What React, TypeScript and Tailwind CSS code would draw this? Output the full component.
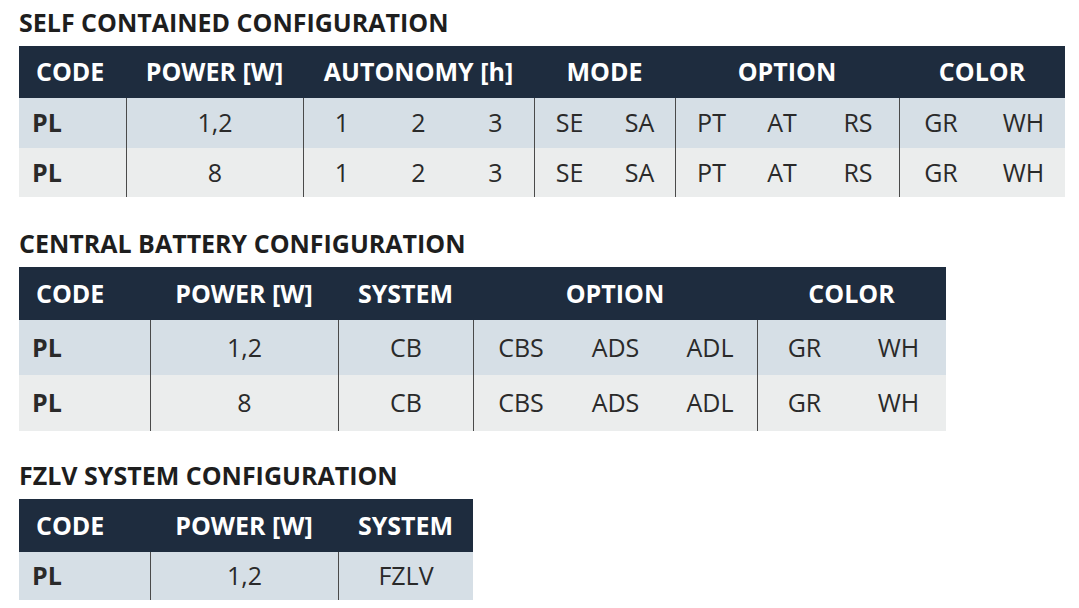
const font = { fontFamily: '"Open Sans", "Noto Sans", sans-serif' };

type Group = { label: string; cols: number };

function Table({
  cols,
  groups,
  rows,
  heights,
}: {
  cols: string;
  groups: Group[];
  rows: string[][][];
  heights: { head: string; rows: string[] };
}) {
  const bgs = ["bg-[#d6dfe6]", "bg-[#ebeded]"];
  return (
    <div className={`grid ${cols} w-max`}>
      {groups.map((g, i) => (
        <div
          key={i}
          className={`${heights.head} flex items-center bg-[#1e2c3e] text-white font-bold text-[25px] ${
            i === 0 ? "justify-start pl-[17px]" : "justify-center"
          }`}
          style={{ gridColumn: `span ${g.cols} / span ${g.cols}` }}
        >
          {g.label}
        </div>
      ))}
      {rows.map((row, r) =>
        row.map((group, gi) =>
          group.map((cell, ci) => (
            <div
              key={`${r}-${gi}-${ci}`}
              className={`${heights.rows[r]} ${bgs[r]} flex items-center text-[25px] text-[#2a2a2a] ${
                gi === 0 ? "justify-start pl-[13px] font-bold" : "justify-center"
              } ${gi > 0 && ci === 0 ? "border-l border-[#4a4a4a]" : ""}`}
            >
              {cell}
            </div>
          ))
        )
      )}
    </div>
  );
}

function Title({ children }: { children: string }) {
  return (
    <h2 className="text-[25px] leading-[32px] font-bold text-[#1e1e1e] mb-2">
      {children}
    </h2>
  );
}

export default function App() {
  const selfRow = (p: string) => [
    ["PL"],
    [p],
    ["1", "2", "3"],
    ["SE", "SA"],
    ["PT", "AT", "RS"],
    ["GR", "WH"],
  ];
  const cbRow = (p: string) => [
    ["PL"],
    [p],
    ["CB"],
    ["CBS", "ADS", "ADL"],
    ["GR", "WH"],
  ];

  return (
    <div className="min-h-screen bg-white pl-[19px] pt-[6px]" style={font}>
      <Title>SELF CONTAINED CONFIGURATION</Title>
      <Table
        cols="grid-cols-[107px_177px_77px_77px_77px_70px_71px_72px_70px_82px_83px_83px]"
        groups={[
          { label: "CODE", cols: 1 },
          { label: "POWER [W]", cols: 1 },
          { label: "AUTONOMY [h]", cols: 3 },
          { label: "MODE", cols: 2 },
          { label: "OPTION", cols: 3 },
          { label: "COLOR", cols: 2 },
        ]}
        rows={[selfRow("1,2"), selfRow("8")]}
        heights={{ head: "h-[52px]", rows: ["h-[50px]", "h-[49px]"] }}
      />

      <div className="mt-[30px]">
        <Title>CENTRAL BATTERY CONFIGURATION</Title>
      </div>
      <Table
        cols="grid-cols-[131px_188px_135px_95px_95px_94px_94px_95px]"
        groups={[
          { label: "CODE", cols: 1 },
          { label: "POWER [W]", cols: 1 },
          { label: "SYSTEM", cols: 1 },
          { label: "OPTION", cols: 3 },
          { label: "COLOR", cols: 2 },
        ]}
        rows={[cbRow("1,2"), cbRow("8")]}
        heights={{ head: "h-[53px]", rows: ["h-[55px]", "h-[56px]"] }}
      />

      <div className="mt-[28px]">
        <Title>FZLV SYSTEM CONFIGURATION</Title>
      </div>
      <Table
        cols="grid-cols-[131px_188px_135px]"
        groups={[
          { label: "CODE", cols: 1 },
          { label: "POWER [W]", cols: 1 },
          { label: "SYSTEM", cols: 1 },
        ]}
        rows={[[["PL"], ["1,2"], ["FZLV"]]]}
        heights={{ head: "h-[53px]", rows: ["h-[48px]"] }}
      />
    </div>
  );
}
